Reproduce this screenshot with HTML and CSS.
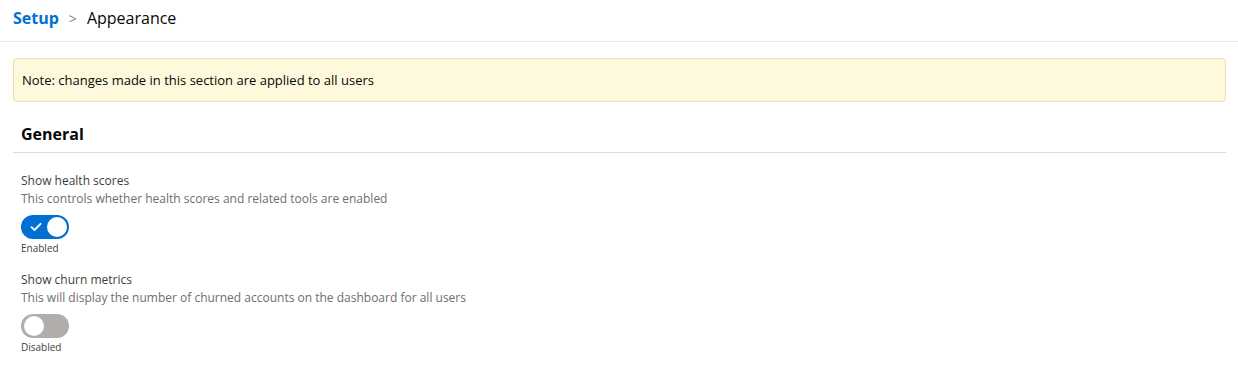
FILE: index.html
```html
<!doctype html>
<html lang="en-US">
    <head>
        <meta charset="utf-8">
        <title>Setup - Appearance</title>
        <link rel="stylesheet" href="styles.css">
    </head>
    <body>
        <header class="crumbs">
            <a href="#" class="crumb-root">Setup</a>
            <span class="crumb-sep">&gt;</span>
            <span class="crumb-page">Appearance</span>
        </header>
        <main class="content">
            <div class="note">Note: changes made in this section are applied to all users</div>
            <h2 class="section-title">General</h2>
            <div class="setting">
                <div class="setting-label">Show health scores</div>
                <div class="setting-help">This controls whether health scores and related tools are enabled</div>
                <label class="toggle on">
                    <span class="track">
                        <svg class="check" width="12" height="10" viewBox="0 0 12 10"><path d="M1.5 5.2 L4.5 8 L10.5 1.8" fill="none" stroke="#fff" stroke-width="1.8" stroke-linecap="round" stroke-linejoin="round"/></svg>
                        <span class="knob"></span>
                    </span>
                    <span class="toggle-text">Enabled</span>
                </label>
            </div>
            <div class="setting">
                <div class="setting-label">Show churn metrics</div>
                <div class="setting-help">This will display the number of churned accounts on the dashboard for all users</div>
                <label class="toggle">
                    <span class="track">
                        <span class="knob"></span>
                    </span>
                    <span class="toggle-text">Disabled</span>
                </label>
            </div>
        </main>
    </body>
</html>
```
FILE: styles.css
```css
* {
    margin: 0;
    padding: 0;
    box-sizing: border-box;
}

body {
    background: #fff;
    color: #080707;
    font-family: 'Open Sans', 'Liberation Sans', sans-serif;
    font-size: 13px;
}

.crumbs {
    height: 42px;
    padding: 0 13px 5px;
    display: flex;
    align-items: center;
    gap: 10px;
    border-bottom: 1px solid #ebebeb;
    font-size: 16px;
}

.crumb-root {
    color: #0070d2;
    font-weight: 700;
    text-decoration: none;
}

.crumb-sep {
    color: #8a8886;
    font-size: 14px;
}

.crumb-page {
    color: #080707;
}

.content {
    padding: 16px 12px 0 13px;
}

.note {
    background: #fef9dc;
    border: 1px solid #e9e0ae;
    border-radius: 4px;
    padding: 13px 8px;
    font-size: 13px;
    line-height: 16px;
}

.section-title {
    font-size: 16px;
    font-weight: 700;
    margin-top: 21px;
    padding: 0 0 7px 8px;
    border-bottom: 1px solid #dddbda;
}

.setting {
    padding: 0 8px;
}

.section-title + .setting {
    margin-top: 19px;
}

.setting-label {
    font-size: 12px;
    line-height: 18px;
    color: #3e3e3c;
}

.setting-help {
    font-size: 12px;
    line-height: 18px;
    color: #706e6b;
}

.toggle {
    display: block;
    margin-top: 7px;
    padding-bottom: 16px;
}

.track {
    width: 48px;
    height: 24px;
    border-radius: 12px;
    background: #b0adab;
    display: flex;
    align-items: center;
    padding: 0 3px;
}

.toggle.on .track {
    background: #0070d2;
    justify-content: space-between;
    padding: 0 2px 0 9px;
}

.knob {
    width: 20px;
    height: 20px;
    border-radius: 50%;
    background: #fff;
}

.check {
    display: block;
}

.toggle-text {
    display: block;
    font-size: 10px;
    line-height: 14px;
    margin-top: 2px;
    color: #3e3e3c;
}
```
